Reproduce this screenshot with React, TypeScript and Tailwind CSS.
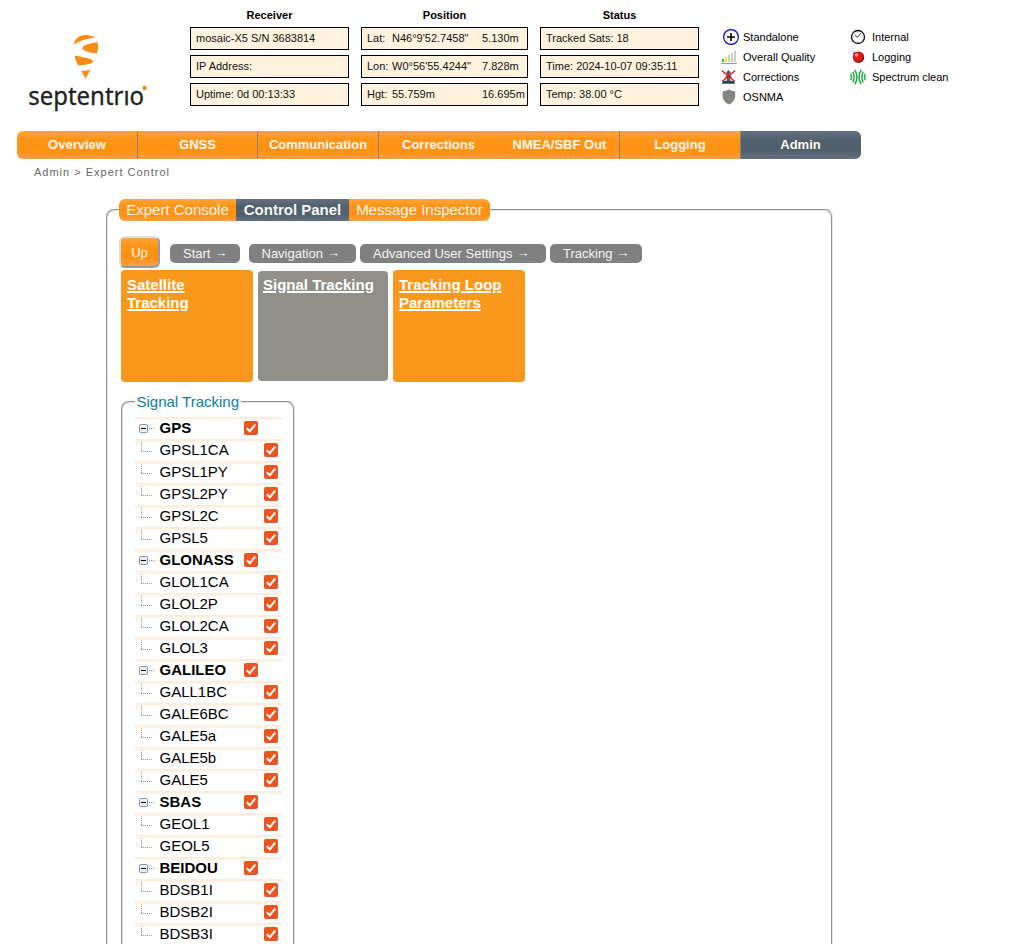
import React from "react";

const Field = ({ children }: { children: React.ReactNode }) => (
  <div className="flex h-[23px] items-center border border-black bg-[#fff3dd] pl-[5px] text-[#111]">{children}</div>
);

const Coord = ({ label, value, dev }: { label: string; value: string; dev: string }) => (
  <Field>
    <span className="w-[25px] shrink-0">{label}</span>
    <span className="w-[90px] shrink-0">{value}</span>
    <span>{dev}</span>
  </Field>
);

const Column = ({ title, width, children }: { title: string; width: string; children: React.ReactNode }) => (
  <div className={`${width} shrink-0`}>
    <div className="h-[27px] pt-[9px] text-center font-bold leading-[13px] text-black">{title}</div>
    <div className="flex flex-col gap-[5px]">{children}</div>
  </div>
);

const Logo = () => (
  <svg width="140" height="94" viewBox="20 30 140 94" className="block overflow-visible">
    <g fill="#f68d17">
      <path d="M73.8 44.8C74.3 38.8 79.5 35 85.5 35C89.8 35 93.8 37 95.6 37.8C88 38.4 79.5 40.6 73.8 44.8Z" />
      <path d="M97.4 42C98.7 46.2 98.1 50.8 96.8 53.4C92.5 52.9 82.3 51.4 82.3 48.2C82.3 44.7 91.8 43 97.4 42Z" />
      <path d="M74.6 55.4C80 57 93 57.7 93 61.5C93 64 84.5 65.2 78.1 65.4C76.6 62.2 75 58.8 74.6 55.4Z" />
      <path d="M81.4 71L90.5 70L85.4 78.4Z" />
      <circle cx="144.6" cy="88" r="2.2" />
    </g>
    <text x="28.3" y="105" textLength="115.8" lengthAdjust="spacingAndGlyphs" fontFamily="'Noto Sans', sans-serif" fontSize="26" fill="#222" stroke="#222" strokeWidth="0.3">
      septentrıo
    </text>
  </svg>
);

const Standalone = () => (
  <svg width="16" height="16" viewBox="0 0 16 16">
    <circle cx="8" cy="8" r="7.4" fill="white" stroke="#0000e8" strokeWidth="1.2" />
    <path d="M8 4v8M4 8h8" stroke="#000" strokeWidth="1.6" />
  </svg>
);
const Quality = () => (
  <svg width="16" height="16" viewBox="0 0 16 16" shapeRendering="crispEdges">
    <path d="M1 10h2v3H1z" fill="#10e010" />
    <path d="M4 8h2v5H4z" fill="#f0e810" />
    <path d="M7 6h2v7H7zM10 4h2v9h-2zM13 2h2v11h-2z" fill="#cccccc" />
    <path d="M0 14h16v1H0z" fill="#999" />
  </svg>
);
const Corrections = () => (
  <svg width="16" height="16" viewBox="0 0 16 16">
    <path d="M7.5 1L10 3.5 8.6 5.4 11 8 8.8 9.6 9.4 12H5.6L6.2 9.6 4 8 6.4 5.4 5 3.5Z" fill="#555d65" />
    <path d="M1 14.8q0-2.8 4-3h5q4 .2 4 3z" fill="#20485c" />
    <path d="M.8 1.5l13 11M14.2 1.5l-13 11" stroke="#e41414" strokeWidth="1.4" />
  </svg>
);
const Shield = () => (
  <svg width="16" height="16" viewBox="0 0 16 16">
    <path d="M8 .9Q10.6 2.6 13.7 2.8V7.8Q13 12.7 8 15Q2.8 12.7 2.2 7.8V2.8Q5.4 2.6 8 .9Z" fill="#858585" stroke="#857c70" />
  </svg>
);
const Clock = () => (
  <svg width="16" height="16" viewBox="0 0 16 16">
    <circle cx="8" cy="8" r="6.5" fill="white" stroke="#111" strokeWidth="1.3" />
    <path d="M4.6 6l3 2.2L10.8 4.2" fill="none" stroke="#222" strokeWidth=".9" />
    <path d="M8 2.6v1M8 12.4v1M2.6 8h1M12.4 8h1" stroke="#777" strokeWidth=".7" />
  </svg>
);
const LogDot = () => (
  <svg width="16" height="16" viewBox="0 0 16 16">
    <circle cx="8.5" cy="8.3" r="5.7" fill="#901010" />
    <circle cx="8" cy="7.8" r="4.8" fill="#ea1818" />
    <circle cx="6.5" cy="6" r="1.8" fill="#ff9898" />
    <path d="M3 4.8l2.4-1.8M11.8 12.2l1.8-2.6" stroke="#222" strokeWidth="1" />
  </svg>
);
const Spectrum = () => (
  <svg width="16" height="16" viewBox="0 0 16 16" fill="none" stroke="#22aa44" strokeWidth="1.5">
    <path d="M.8 4.8Q2.2 8 .8 11.2M2.8 2.6Q5.4 8 2.8 13.4M4.8 .8Q9.2 8 4.8 15.2M11.2 .8Q6.8 8 11.2 15.2M13.2 2.6Q10.6 8 13.2 13.4M15.2 4.8Q13.8 8 15.2 11.2" />
  </svg>
);

const StatusItem = ({ icon, label }: { icon: React.ReactNode; label: string }) => (
  <div className="flex h-5 items-center">
    <span className="w-[22px] shrink-0">{icon}</span>
    <span>{label}</span>
  </div>
);

const ORANGE = "bg-[linear-gradient(#ffa53b_0%,#ff9517_30%,#ff9012_70%,#fa9f45_100%)]";
const SLATE = "bg-[linear-gradient(#647082_0%,#50606d_35%,#50606d_70%,#647082_100%)]";

const tabs = [
  { label: "Overview", style: "w-[121px] border-r" },
  { label: "GNSS", style: "w-[120px] border-r" },
  { label: "Communication", style: "w-[121px] border-r" },
  { label: "Corrections", style: "w-[121px] pr-[2px]" },
  { label: "NMEA/SBF Out", style: "w-[120px] border-r" },
  { label: "Logging", style: "w-[121px] border-r" },
  { label: "Admin", style: "w-[120px] pr-px bg-[linear-gradient(#647082_0%,#50606d_35%,#50606d_70%,#647082_100%)]" },
];

const groups: [string, string[]][] = [
  ["GPS", ["GPSL1CA", "GPSL1PY", "GPSL2PY", "GPSL2C", "GPSL5"]],
  ["GLONASS", ["GLOL1CA", "GLOL2P", "GLOL2CA", "GLOL3"]],
  ["GALILEO", ["GALL1BC", "GALE6BC", "GALE5a", "GALE5b", "GALE5"]],
  ["SBAS", ["GEOL1", "GEOL5"]],
  ["BEIDOU", ["BDSB1I", "BDSB2I", "BDSB3I"]],
];

const Check = () => (
  <svg width="14" height="14" viewBox="0 0 14 14" className="shrink-0">
    <rect width="14" height="14" rx="2" fill="#e95420" />
    <path d="M2.8 7.3l3 2.9 5.4-6.6" fill="none" stroke="#fff" strokeWidth="2" />
  </svg>
);

const Row = ({ label, parent }: { label: string; parent?: boolean }) => (
  <div className="flex h-[22px] w-[147px] items-center bg-[linear-gradient(#ffead5_0px,#fff0e2_2px,#fff_4px)]">
    <svg width="24" height="22" viewBox="0 0 24 22" className="shrink-0">
      {parent ? (
        <>
          <rect x="4.5" y="7.5" width="8" height="8" rx="1" fill="#eef0f0" stroke="#7c98b4" />
          <path d="M6 11.5h5" stroke="#000" />
          <path d="M14 11.5h5" stroke="#888" strokeDasharray="1 1" />
        </>
      ) : (
        <path d="M6.5 3v9M6 12.5h11" fill="none" stroke="#999" strokeDasharray="1 1" />
      )}
    </svg>
    <span className={parent ? "w-[85px] pl-[0.5px] font-bold" : "w-[105px] pl-[0.5px]"}>{label}</span>
    <Check />
  </div>
);

const Crumb = ({ label, className }: { label: string; className: string }) => (
  <div className={`flex h-[19px] items-center gap-1 whitespace-nowrap rounded-[5px] bg-[#808080] text-[13px] leading-none text-[#f4f4f4] ${className}`}>
    <span>{label}</span>
    <span className="-translate-y-px">→</span>
  </div>
);

const tileText = "rounded-[4px] text-[15px] font-bold leading-[18px] text-white underline decoration-2 underline-offset-1";

export default function App() {
  return (
    <div className="h-[944px] w-[1010px] overflow-hidden bg-white font-['Liberation_Sans',Arial,sans-serif] text-[15px] text-black">
      <header className="flex h-[131px] text-[11px]">
        <div className="w-[190px] shrink-0 pl-5 pt-[30px]">
          <Logo />
        </div>
        <div className="flex gap-3">
          <Column title="Receiver" width="w-[159px]">
            <Field>mosaic-X5 S/N 3683814</Field>
            <Field>IP Address:</Field>
            <Field>Uptime: 0d 00:13:33</Field>
          </Column>
          <Column title="Position" width="w-[167px]">
            <Coord label="Lat:" value={'N46°9\'52.7458"'} dev="5.130m" />
            <Coord label="Lon:" value={'W0°56\'55.4244"'} dev="7.828m" />
            <Coord label="Hgt:" value="55.759m" dev="16.695m" />
          </Column>
          <Column title="Status" width="w-[159px]">
            <Field>Tracked Sats: 18</Field>
            <Field>Time: 2024-10-07 09:35:11</Field>
            <Field>Temp: 38.00 °C</Field>
          </Column>
        </div>
        <div className="ml-[22px] flex pt-[27px]">
          <div className="w-[129px]">
            <div className="flex h-5 items-center">
              <span className="w-[22px] shrink-0 pl-[2px]"><Standalone /></span>
              <span>Standalone</span>
            </div>
            <StatusItem icon={<Quality />} label="Overall Quality" />
            <StatusItem icon={<Corrections />} label="Corrections" />
            <StatusItem icon={<Shield />} label="OSNMA" />
          </div>
          <div>
            <StatusItem icon={<Clock />} label="Internal" />
            <StatusItem icon={<LogDot />} label="Logging" />
            <StatusItem icon={<Spectrum />} label="Spectrum clean" />
          </div>
        </div>
      </header>

      <nav className={`ml-[17px] flex h-7 w-[844px] overflow-hidden rounded-[6px] ${ORANGE}`}>
        {tabs.map((t) => (
          <div
            key={t.label}
            className={`flex shrink-0 items-center justify-center whitespace-nowrap border-[#8a8078] text-[13px] font-bold text-[#fff8ee] ${t.style}`}
          >
            {t.label}
          </div>
        ))}
      </nav>
      <div className="h-10 pl-[34px] pt-[6px] text-[11px] leading-[14px] tracking-[1px] text-[#666]">Admin &gt; Expert Control</div>

      <fieldset className="ml-[106px] mt-0 h-[800px] w-[727px] rounded-[8px] border-2 border-[#e4e4e8] pl-3 [border-style:groove]">
        <legend className="-ml-[1px] flex h-[22px] overflow-hidden rounded-[6px] text-[15px] leading-[22px] text-[#fff8ee]">
          <div className={`w-[117px] text-center ${ORANGE}`}>Expert Console</div>
          <div className={`w-[113px] text-center font-bold text-[#f4f6f8] ${SLATE}`}>Control Panel</div>
          <div className={`w-[141px] text-center ${ORANGE}`}>Message Inspector</div>
        </legend>

        <div className="mt-[15px] -ml-[1px] flex items-start">
          <button className={`h-8 w-[41px] rounded-[6px] border-2 border-t-[#ddd] border-l-[#ddd] border-r-[#999] border-b-[#999] pt-[2px] text-[13px] text-[#fff8ee] ${ORANGE}`}>
            Up
          </button>
          <Crumb label="Start" className="ml-[10px] mt-2 w-[70px] pl-[13px]" />
          <Crumb label="Navigation" className="ml-[9px] mt-2 w-[107px] pl-[12.5px]" />
          <Crumb label="Advanced User Settings" className="ml-1 mt-2 w-[186px] pl-[13px]" />
          <Crumb label="Tracking" className="ml-1 mt-2 w-[92px] pl-[13px]" />
        </div>

        <div className="ml-[1px] mt-[2px] flex items-center gap-[5px]">
          <div className={`h-[112px] w-[132px] bg-[#f9981d] px-[6px] pt-[6px] ${tileText}`}>
            Satellite
            <br />
            Tracking
          </div>
          <div className={`h-[110px] w-[130px] bg-[#908f8a] px-[5px] pt-[5px] ${tileText}`}>Signal Tracking</div>
          <div className={`h-[112px] w-[132px] bg-[#f9981d] px-[6px] pt-[6px] ${tileText}`}>
            Tracking Loop
            <br />
            Parameters
          </div>
        </div>

        <fieldset className="ml-[1px] mt-[10px] w-[174px] rounded-[8px] border-2 border-[#e4e4e8] pl-3 [border-style:groove]">
          <legend className="h-[20px] px-[1.5px] leading-[20px] text-[#087d9b]">Signal Tracking</legend>
          <div className="pb-3 pt-[5px] leading-[22px]">
            {groups.map(([name, items]) => (
              <React.Fragment key={name}>
                <Row label={name} parent />
                {items.map((s) => (
                  <Row key={s} label={s} />
                ))}
              </React.Fragment>
            ))}
          </div>
        </fieldset>
      </fieldset>
    </div>
  );
}
